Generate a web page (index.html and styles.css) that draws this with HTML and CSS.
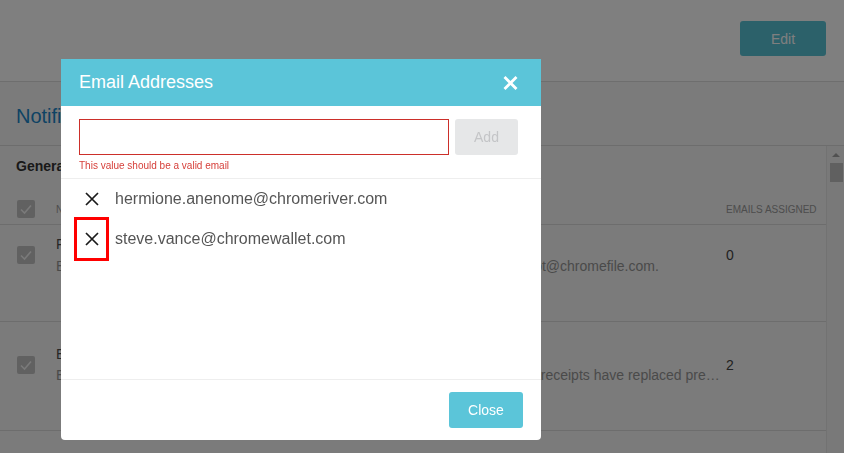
FILE: index.html
```html
<!DOCTYPE html>
<html lang="en">
<head>
<meta charset="utf-8">
<title>Notifications</title>
<link rel="stylesheet" href="styles.css">
</head>
<body>
<div class="page">
  <header class="topbar">
    <button class="btn btn-edit">Edit</button>
  </header>
  <main class="panel">
    <h1 class="panel-title">Notifications</h1>
    <div class="scroll-area">
      <div class="scroll-content">
        <h2 class="section-title">General</h2>
        <div class="table-head">
          <span class="checkbox"><svg viewBox="0 0 18 18" width="18" height="18"><path d="M4 9.5 L7.5 13 L14 5.5" fill="none" stroke="#f4f4f4" stroke-width="1.6"/></svg></span>
          <span class="col-name">NAME</span>
          <span class="col-count">EMAILS ASSIGNED</span>
        </div>
        <div class="row">
          <span class="checkbox"><svg viewBox="0 0 18 18" width="18" height="18"><path d="M4 9.5 L7.5 13 L14 5.5" fill="none" stroke="#f4f4f4" stroke-width="1.6"/></svg></span>
          <div class="row-text">
            <div class="row-title">Forwarded Receipts Failed</div>
            <div class="row-desc">Be notified if your e-mailed receipt can't be processed after sending it to receipt@chromefile.com.</div>
          </div>
          <span class="row-count">0</span>
        </div>
        <div class="row row-tall">
          <span class="checkbox"><svg viewBox="0 0 18 18" width="18" height="18"><path d="M4 9.5 L7.5 13 L14 5.5" fill="none" stroke="#f4f4f4" stroke-width="1.6"/></svg></span>
          <div class="row-text">
            <div class="row-title">Email Receipts</div>
            <div class="row-desc row-desc-tight">Eliminate paper when forwarding receipts from your email inbox. All electronic receipts have replaced previous paper copies of receipts.</div>
          </div>
          <span class="row-count">2</span>
        </div>
        <div class="row row-empty"></div>
      </div>
      <div class="scrollbar">
        <span class="scroll-arrow"></span>
        <span class="scroll-thumb"></span>
      </div>
    </div>
  </main>
</div>

<div class="overlay"></div>

<div class="modal" role="dialog" aria-label="Email Addresses">
  <div class="modal-header">
    <span class="modal-title">Email Addresses</span>
    <button class="modal-close" aria-label="Close">
      <svg viewBox="0 0 15 14" width="15" height="14"><path d="M1.5 1 L13.5 13 M13.5 1 L1.5 13" stroke="#fff" stroke-width="2.8" fill="none"/></svg>
    </button>
  </div>
  <div class="modal-form">
    <div class="form-row">
      <input class="email-input" type="text" aria-label="Email">
      <button class="btn btn-add">Add</button>
    </div>
    <div class="form-error">This value should be a valid email</div>
  </div>
  <ul class="email-list">
    <li class="email-item">
      <button class="remove-btn" aria-label="Remove"><svg viewBox="0 0 14 14" width="14" height="14"><path d="M1 1 L13 13 M13 1 L1 13" stroke="#1a1a1a" stroke-width="1.7" fill="none"/></svg></button>
      <span class="email-text">hermione.anenome@chromeriver.com</span>
    </li>
    <li class="email-item">
      <button class="remove-btn remove-highlight" aria-label="Remove"><svg viewBox="0 0 14 14" width="14" height="14"><path d="M1 1 L13 13 M13 1 L1 13" stroke="#1a1a1a" stroke-width="1.7" fill="none"/></svg></button>
      <span class="email-text">steve.vance@chromewallet.com</span>
    </li>
  </ul>
  <div class="modal-footer">
    <button class="btn btn-close">Close</button>
  </div>
</div>
</body>
</html>
```

FILE: styles.css
```css
* { box-sizing: border-box; }
html, body { margin: 0; padding: 0; }
body {
  font-family: "Liberation Sans", Arial, sans-serif;
  background: #f6f6f6;
  width: 844px;
  height: 453px;
  overflow: hidden;
}
button { font-family: inherit; cursor: pointer; }

.page { display: flex; flex-direction: column; height: 453px; }

.topbar {
  height: 82px;
  flex: none;
  background: #fefefe;
  border-bottom: 1px solid #dcdcdc;
  display: flex;
  justify-content: flex-end;
  align-items: flex-start;
  padding: 21px 18px 0 0;
}
.btn { border: none; border-radius: 3px; font-size: 14px; }
.btn-edit {
  width: 86px;
  height: 35px;
  background: #59c2d5;
  color: #fff;
}

.panel { flex: 1; display: flex; flex-direction: column; min-height: 0; }
.panel-title {
  margin: 0;
  height: 64px;
  flex: none;
  padding: 24px 0 0 16px;
  font-size: 20px;
  line-height: 20px;
  font-weight: normal;
  color: #1c86c8;
  border-bottom: 1px solid #dadada;
}
.scroll-area { flex: 1; display: flex; min-height: 0; }
.scroll-content { flex: 1; border-right: 1px solid #e4e4e4; }
.section-title {
  margin: 10px 0 0;
  padding-left: 16px;
  font-size: 14px;
  line-height: 20px;
  font-weight: bold;
  color: #333;
}
.checkbox {
  width: 18px;
  height: 18px;
  flex: none;
  border-radius: 2px;
  background: #c2c2c2;
  display: flex;
}
.table-head {
  display: flex;
  align-items: center;
  padding: 24px 10px 6px 17px;
  border-bottom: 1px solid #dadada;
}
.col-name { margin-left: 21px; flex: 1; font-size: 10px; color: #9a9a9a; }
.col-count { width: 90px; font-size: 10px; color: #9a9a9a; white-space: nowrap; }

.row {
  display: flex;
  align-items: center;
  padding: 9px 10px 45px 17px;
  border-bottom: 1px solid #dadada;
}
.row-tall { padding-top: 22px; padding-bottom: 45px; }
.row-empty { height: 30px; padding: 0; border-bottom: none; }
.row-text { margin-left: 21px; width: 664px; margin-right: 6px; min-width: 0; }
.row-title { font-size: 14px; line-height: 20px; color: #4c4c4c; }
.row-desc {
  margin-top: 2px;
  font-size: 14px;
  line-height: 20px;
  color: #959595;
  white-space: nowrap;
  overflow: hidden;
  text-overflow: ellipsis;
}
.row-desc-tight { margin-top: 1px; }
.row-count { width: 90px; font-size: 14px; color: #444; }

.scrollbar {
  width: 18px;
  flex: none;
  background: #f2f2f2;
  display: flex;
  flex-direction: column;
  align-items: center;
  padding-top: 7px;
}
.scroll-arrow {
  width: 0;
  height: 0;
  border-left: 4px solid transparent;
  border-right: 4px solid transparent;
  border-bottom: 4px solid #a3a3a3;
}
.scroll-thumb {
  margin-top: 6px;
  width: 13px;
  height: 19px;
  background: #c1c1c1;
}

.overlay {
  position: fixed;
  inset: 0;
  background: rgba(0, 0, 0, 0.5);
}

.modal {
  position: fixed;
  left: 61px;
  top: 59px;
  width: 480px;
  height: 381px;
  background: #fff;
  border-radius: 0 0 4px 4px;
  display: flex;
  flex-direction: column;
  overflow: hidden;
}
.modal-header {
  height: 47px;
  flex: none;
  background: #5bc5d9;
  display: flex;
  align-items: center;
  justify-content: space-between;
  padding: 0 23px 0 18px;
}
.modal-title { font-size: 18px; color: #fff; }
.modal-close {
  background: none;
  border: none;
  padding: 0;
  width: 15px;
  height: 14px;
  display: flex;
  margin-top: 1px;
}
.modal-form {
  flex: none;
  padding: 13px 23px 6px 18px;
  border-bottom: 1px solid #eeeeee;
}
.form-row { display: flex; gap: 6px; }
.email-input {
  flex: 1;
  height: 36px;
  border: 1px solid #cc2f2a;
  border-radius: 0;
  outline: none;
  padding: 0 8px;
  font-family: inherit;
  font-size: 14px;
}
.btn-add {
  width: 63px;
  height: 36px;
  background: #e6e7e8;
  color: #c4c5c7;
}
.form-error {
  margin-top: 5px;
  font-size: 10px;
  line-height: 12px;
  color: #d6403b;
}
.email-list {
  flex: 1;
  list-style: none;
  margin: 0;
  padding: 0 0 0 16px;
  border-bottom: 1px solid #eeeeee;
}
.email-item {
  height: 40px;
  display: flex;
  align-items: center;
  gap: 9px;
}
.remove-btn {
  width: 29px;
  height: 38px;
  border: none;
  background: none;
  padding: 0;
  display: flex;
  align-items: center;
  justify-content: center;
}
.remove-highlight { outline: 3px solid #f00; }
.email-text { font-size: 16px; color: #555; }
.modal-footer {
  flex: none;
  display: flex;
  justify-content: flex-end;
  padding: 12px 18px;
}
.btn-close {
  width: 74px;
  height: 36px;
  background: #5bc5d9;
  color: #fff;
}
```
